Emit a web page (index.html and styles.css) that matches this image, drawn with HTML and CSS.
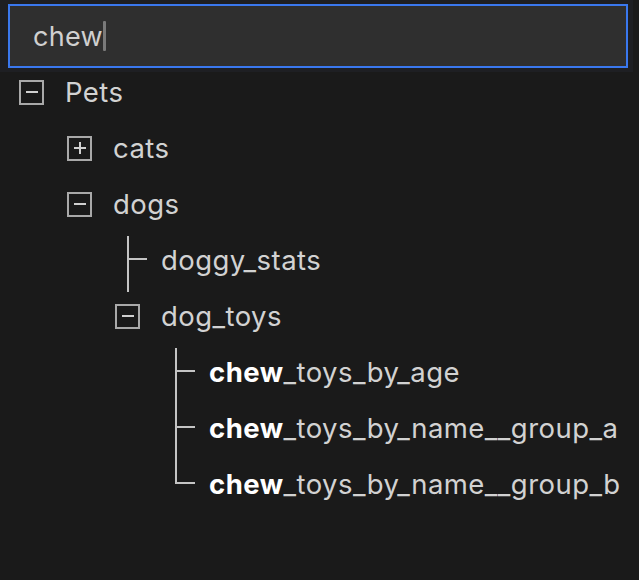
FILE: index.html
```html
<!DOCTYPE html>
<html lang="en">
<head>
<meta charset="utf-8">
<title>Tree filter</title>
<link rel="stylesheet" href="styles.css">
</head>
<body>
<div class="search">
  <div class="input"><span class="query">chew</span><span class="caret"></span></div>
</div>
<ul class="tree">
  <li class="row lvl0"><span class="toggle minus"></span><span class="label">Pets</span></li>
  <li class="row lvl1"><span class="toggle plus"></span><span class="label">cats</span></li>
  <li class="row lvl1"><span class="toggle minus"></span><span class="label">dogs</span></li>
  <li class="row lvl2"><span class="guide mid"></span><span class="label">doggy_stats</span></li>
  <li class="row lvl2"><span class="toggle minus"></span><span class="label">dog_toys</span></li>
  <li class="row lvl3"><span class="guide mid"></span><span class="label"><b>chew</b>_toys_by_age</span></li>
  <li class="row lvl3"><span class="guide mid"></span><span class="label"><b>chew</b>_toys_by_name__group_a</span></li>
  <li class="row lvl3"><span class="guide last"></span><span class="label"><b>chew</b>_toys_by_name__group_b</span></li>
</ul>
</body>
</html>
```
FILE: styles.css
```css
html, body {
  margin: 0;
  padding: 0;
  background: #1a1a1a;
  height: 100%;
}
body {
  font-family: Inter, "Noto Sans", sans-serif;
  color: #d2d2d2;
  font-size: 27px;
}
.search {
  width: 633px;
  background: #1e1f23;
  padding: 4px 5px 4px 8px;
  box-sizing: border-box;
}
.input {
  height: 64px;
  box-sizing: border-box;
  border: 2px solid #3a78ee;
  background: #2f2f2f;
  display: flex;
  align-items: center;
  padding-left: 23px;
}
.query {
  color: #d0d0d0;
  font-size: 27px;
  letter-spacing: 0.3px;
}
.caret {
  display: inline-block;
  width: 3px;
  height: 30px;
  background: #7a7a7a;
  border-radius: 1px;
}
.tree {
  list-style: none;
  margin: 0;
  padding: 0;
  display: flex;
  flex-direction: column;
  gap: 16px;
}
.row {
  height: 40px;
  display: flex;
  align-items: center;
  gap: 21px;
  white-space: nowrap;
}
.lvl0 { padding-left: 19px; }
.lvl1 { padding-left: 67px; }
.lvl2 { padding-left: 115px; }
.lvl3 { padding-left: 163px; }
.label {
  font-size: 27.5px;
  letter-spacing: 0.45px;
  color: #d2d2d2;
}
.label b {
  color: #ffffff;
  font-weight: 700;
}
.toggle {
  width: 25px;
  height: 25px;
  box-sizing: border-box;
  border: 2px solid #a9a9a9;
  position: relative;
  flex: none;
}
.toggle::before {
  content: "";
  position: absolute;
  left: 4.5px;
  top: 9.5px;
  width: 12px;
  height: 2px;
  background: #d0d0d0;
}
.plus::after {
  content: "";
  position: absolute;
  left: 9.5px;
  top: 4.5px;
  width: 2px;
  height: 12px;
  background: #d0d0d0;
}
.guide {
  width: 25px;
  height: 40px;
  position: relative;
  flex: none;
}
.guide::before {
  content: "";
  position: absolute;
  left: 12px;
  top: -4px;
  width: 2px;
  background: #c4c4c4;
}
.guide.mid::before { height: 56px; }
.guide.last::before { height: 24px; }
.guide::after {
  content: "";
  position: absolute;
  left: 12px;
  top: 18px;
  width: 20px;
  height: 2px;
  background: #c4c4c4;
}
```
